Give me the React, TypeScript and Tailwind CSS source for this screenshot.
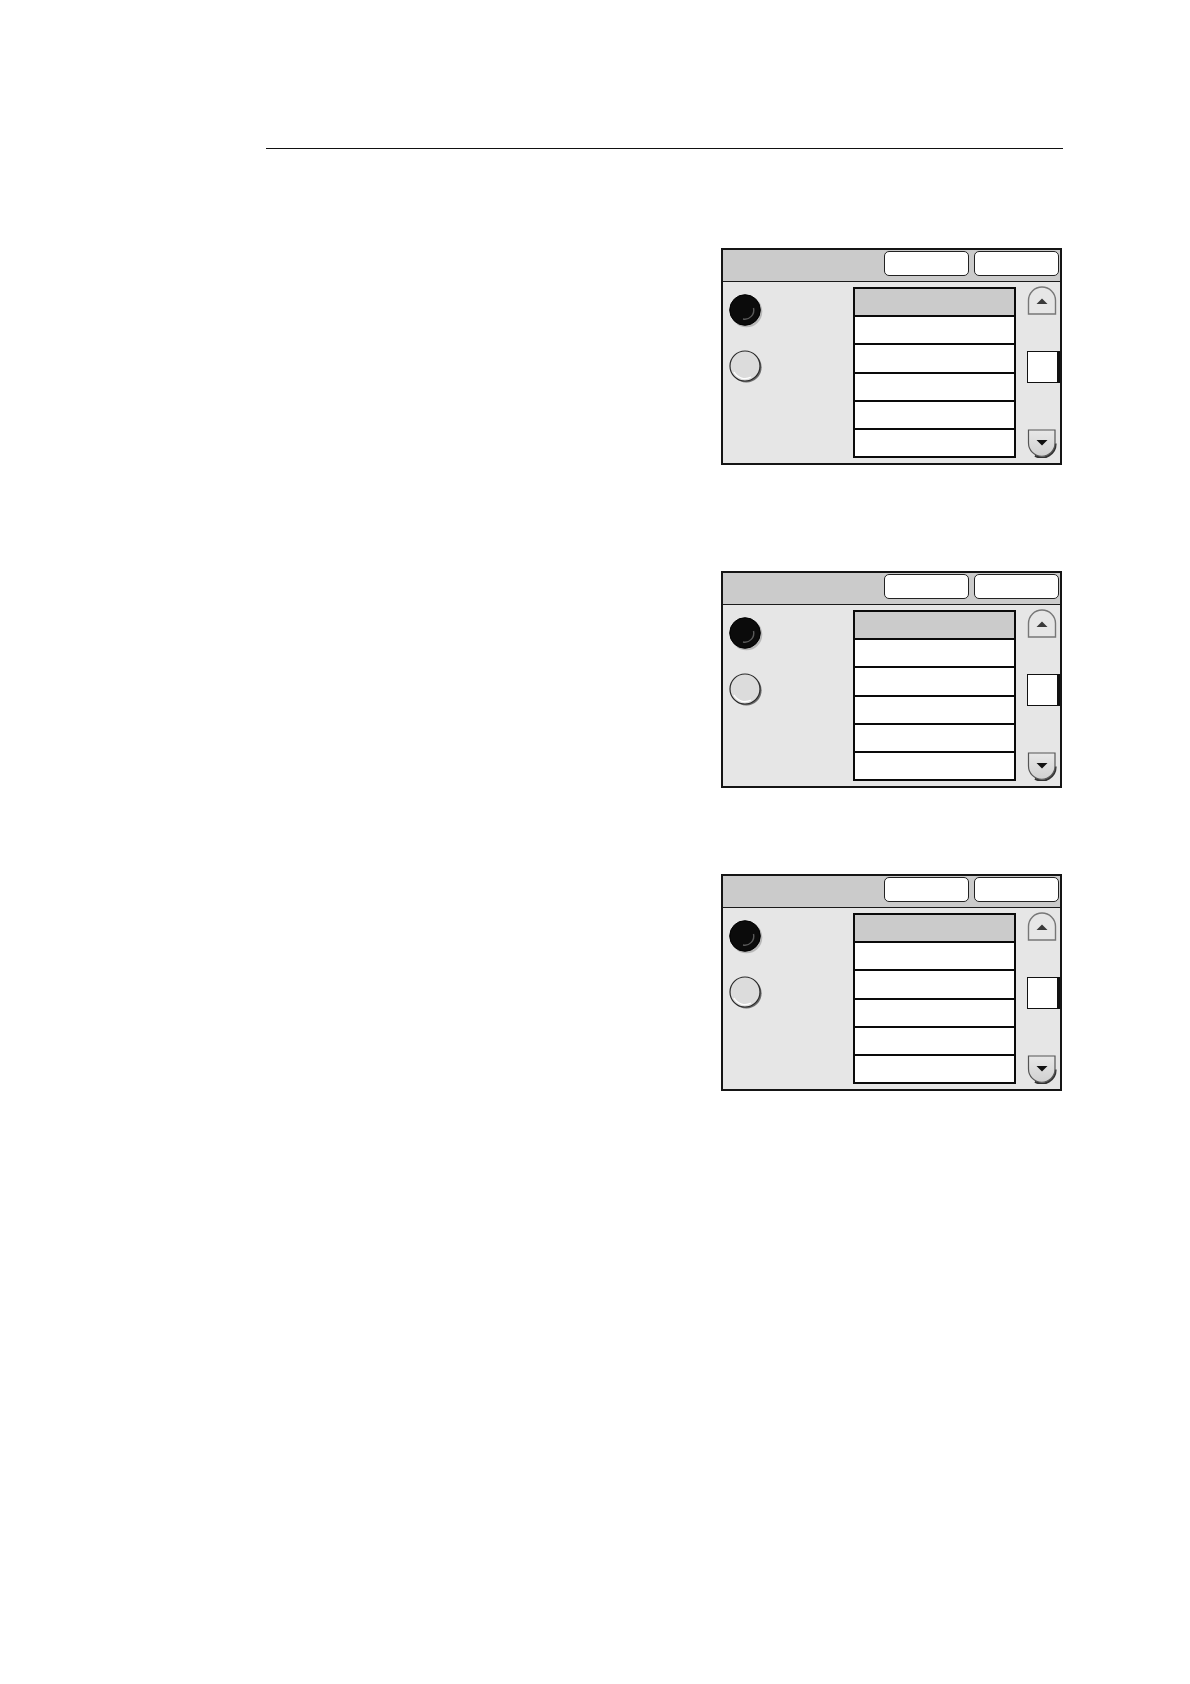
import React from "react";

function RadioOn() {
  return (
    <svg width="34" height="34" viewBox="0 0 34 34">
      <circle cx="17.5" cy="17.5" r="15.8" fill="#9a9a9a" opacity="0.6" />
      <circle cx="16" cy="16" r="15.3" fill="#0b0b0b" stroke="#000" strokeWidth="1" />
      <path d="M24.5 14 A9 9 0 0 1 14 25" fill="none" stroke="#5a5a5a" strokeWidth="1.4" />
    </svg>
  );
}

function RadioOff() {
  return (
    <svg width="34" height="34" viewBox="0 0 34 34">
      <circle cx="17.3" cy="17.3" r="15.3" fill="#6a6a6a" />
      <circle cx="16" cy="16" r="15" fill="#dcdcdc" stroke="#2a2a2a" strokeWidth="1.2" />
      <path d="M5 22 A12.5 12.5 0 0 0 22 27" fill="none" stroke="#ffffff" strokeWidth="1.3" />
    </svg>
  );
}

function ScrollUp() {
  return (
    <svg width="30" height="29" viewBox="0 0 30 29">
      <path d="M1.5 28 V14.5 A13.5 13.5 0 0 1 28.5 14.5 V28 Z" fill="#e6e6e6" stroke="#777" strokeWidth="1.4" />
      <polygon points="9.5,18 20.5,18 15,12.5" fill="#3a3a3a" />
    </svg>
  );
}

function ScrollDown() {
  return (
    <svg width="30" height="29" viewBox="0 0 30 29">
      <defs>
        <linearGradient id="dg" x1="0" y1="0" x2="0" y2="1">
          <stop offset="0" stopColor="#e8e8e8" />
          <stop offset="1" stopColor="#d0d0d0" />
        </linearGradient>
      </defs>
      <path d="M28.5 14.5 A13.5 13.5 0 0 1 8 26.5" fill="none" stroke="#333" strokeWidth="2.2" />
      <path d="M1.5 1 H28 V14 A13.25 13.25 0 0 1 1.5 14 Z" fill="url(#dg)" stroke="#555" strokeWidth="1.2" />
      <polygon points="9.5,11 20.5,11 15,16.5" fill="#111" />
    </svg>
  );
}

function Panel() {
  const rows = [0, 1, 2, 3, 4, 5];
  return (
    <div className="w-[341px] h-[217px] border-2 border-[#151515] bg-[#e6e6e6] flex flex-col">
      <div className="h-[32px] bg-[#cbcbcb] border-b border-[#1a1a1a] flex justify-end items-start pt-[1px] pr-[1px] gap-[5px]">
        <div className="w-[85px] h-[25px] bg-white border border-[#222] rounded-[5px]" />
        <div className="w-[85px] h-[25px] bg-white border border-[#222] rounded-[5px]" />
      </div>
      <div className="flex flex-1">
        <div className="w-[34px] ml-[6px] pt-[12px] flex flex-col gap-[22px]">
          <RadioOn />
          <RadioOff />
        </div>
        <div className="ml-[90px] mt-[5px] w-[163px] h-[171px] border-2 border-[#0a0a0a] flex flex-col bg-white">
          {rows.map((r) => (
            <div
              key={r}
              className={
                r === 0
                  ? "flex-1 bg-[#cbcbcb]"
                  : "flex-1 bg-white border-t-2 border-[#0a0a0a]"
              }
            />
          ))}
        </div>
        <div className="ml-[11px] w-[33px] mt-[4px] h-[172px] flex flex-col items-start">
          <ScrollUp />
          <div className="mt-[36px] w-[33px] h-[32px] bg-white border border-[#111] border-r-[3px]" />
          <div className="mt-[46px]">
            <ScrollDown />
          </div>
        </div>
      </div>
    </div>
  );
}

export default function App() {
  return (
    <div className="w-[1190px] h-[1684px] bg-white pt-[148px] pl-[266px]">
      <div className="w-[797px] h-px bg-[#111]" />
      <div className="pl-[455px]">
        <div className="mt-[99px]">
          <Panel />
        </div>
        <div className="mt-[106px]">
          <Panel />
        </div>
        <div className="mt-[86px]">
          <Panel />
        </div>
      </div>
    </div>
  );
}
